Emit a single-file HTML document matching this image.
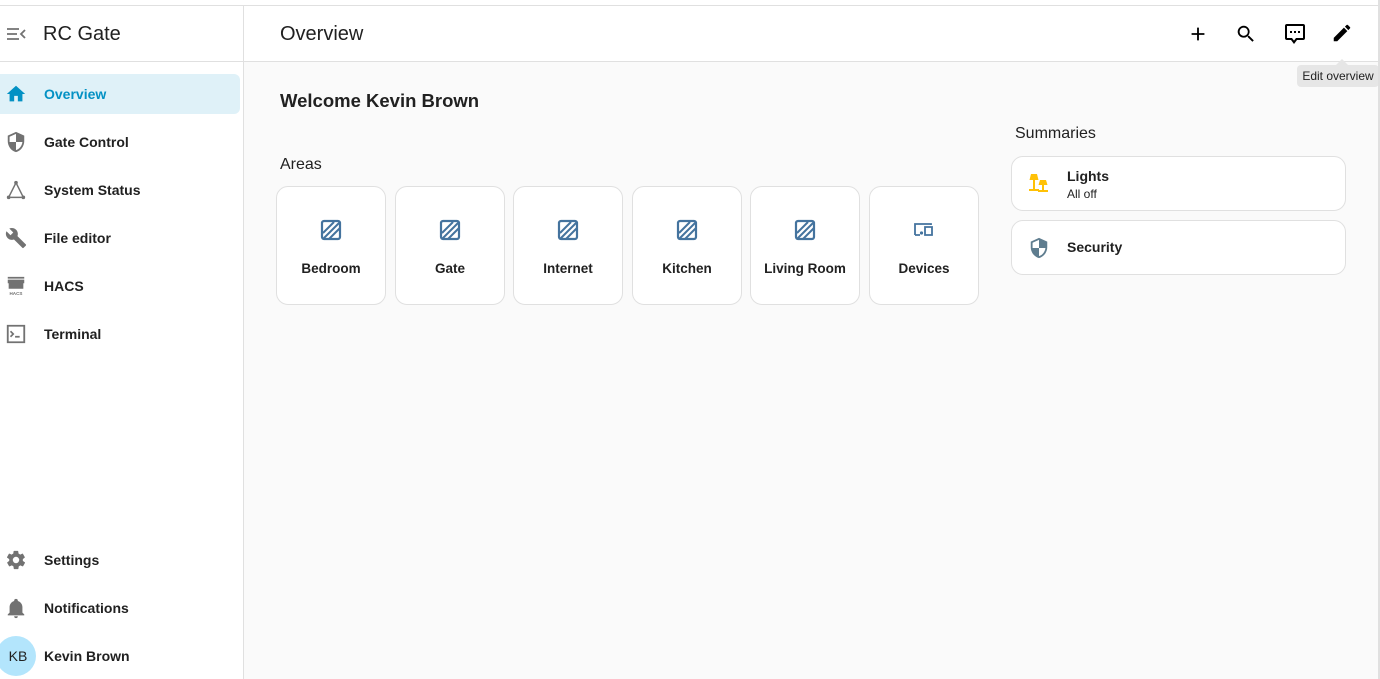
<!DOCTYPE html>
<html><head><style>
*{box-sizing:border-box;margin:0;padding:0}
body{width:1380px;height:679px;overflow:hidden;font-family:"Liberation Sans",sans-serif;background:#fff;position:relative;color:#212121}
.top{position:absolute;left:0;top:5px;width:1380px;height:1px;background:#e0e0e0}
.side{position:absolute;left:0;top:6px;width:244px;height:673px;border-right:1px solid #e0e0e0;background:#fff}
.main{position:absolute;left:244px;top:6px;width:1134px;height:673px;background:#fafafa}
.rline{position:absolute;left:1378px;top:0;width:2px;height:679px;background:#e0e0e0}
.hdr{position:absolute;left:0;top:0;width:100%;height:56px;border-bottom:1px solid #e0e0e0;background:#fff}
.item{position:absolute;left:0;width:240px;height:40px;display:flex;align-items:center;font-size:14px;font-weight:bold;color:#212121}
.item svg{position:absolute;left:5px;width:22px;height:22px;fill:#727272}
.item span{position:absolute;left:44px}
.card{position:absolute;top:180px;width:110px;height:119px;background:#fff;border:1px solid #e0e0e0;border-radius:12px;text-align:center}
.card svg{position:absolute;left:43px;top:32px;width:22px;height:22px}
.card div{position:absolute;top:74px;width:100%;font-size:13.5px;font-weight:bold}
.sum{position:absolute;left:767px;width:335px;height:55px;background:#fff;border:1px solid #e0e0e0;border-radius:12px}
</style></head><body>
<div class="top"></div>
<div class="side">
 <svg style="position:absolute;left:6px;top:20px" width="20" height="16" viewBox="0 0 20 16"><path d="M1 3h12M1 8h10M1 13h12M19 4l-4 4 4 4" stroke="#727272" stroke-width="1.8" fill="none"/></svg>
 <div style="position:absolute;left:43px;top:17px;font-size:20px">RC Gate</div>
 <div style="position:absolute;left:0;top:55px;width:243px;height:1px;background:#e0e0e0"></div>
 <div class="item" style="top:68px;background:#dff1f8;border-radius:0 6px 6px 0"><svg viewBox="0 0 24 24" style="fill:#0391c4"><path d="M10 20v-6h4v6h5v-8h3L12 3 2 12h3v8z"/></svg><span style="color:#0391c4">Overview</span></div>
 <div class="item" style="top:116px"><svg viewBox="0 0 24 24"><path d="M12 1L3 5v6c0 5.5 3.8 10.7 9 12 5.2-1.3 9-6.5 9-12V5zm0 11h7c-.5 4.1-3.3 7.8-7 8.9V12H5V6.3l7-3.1z"/></svg><span>Gate Control</span></div>
 <div class="item" style="top:164px"><svg viewBox="0 0 24 24"><path d="M12 2a2 2 0 110 4 2 2 0 010-4zM4 18a2 2 0 110 4 2 2 0 010-4zm16 0a2 2 0 110 4 2 2 0 010-4z"/><path d="M12 4L4 20M12 4l8 16M6 20h12" stroke="#727272" stroke-width="1.6" fill="none"/></svg><span>System Status</span></div>
 <div class="item" style="top:212px"><svg viewBox="0 0 24 24"><path d="M22.7 19l-9.1-9.1c.9-2.3.4-5-1.5-6.9-2-2-5-2.4-7.4-1.3L9 6 6 9 1.6 4.7C.4 7.1.9 10.1 2.9 12.1c1.9 1.9 4.6 2.4 6.9 1.5l9.1 9.1c.4.4 1 .4 1.4 0l2.3-2.3c.5-.4.5-1.1.1-1.4z"/></svg><span>File editor</span></div>
 <div class="item" style="top:260px"><svg viewBox="0 0 24 24"><path d="M3 2h18v2H3zM3 5h18v4H3zM4 9h16v6H4z"/><text x="12" y="22" font-size="5" text-anchor="middle" fill="#727272" font-family="Liberation Sans">HACS</text></svg><span>HACS</span></div>
 <div class="item" style="top:308px"><svg viewBox="0 0 24 24"><path d="M3 3h18v18H3z" stroke="#727272" stroke-width="2" fill="none"/><path d="M6 9l3 3-3 3M11 15h5" stroke="#727272" stroke-width="1.8" fill="none"/></svg><span>Terminal</span></div>
 <div class="item" style="top:534px"><svg viewBox="0 0 24 24"><path d="M12 15.5a3.5 3.5 0 110-7 3.5 3.5 0 010 7zm7.4-2.5c.1-.3.1-.7.1-1s0-.7-.1-1l2.1-1.6c.2-.2.2-.4.1-.6l-2-3.5c-.1-.2-.4-.3-.6-.2l-2.5 1c-.5-.4-1.1-.7-1.700-1L14.4 2.4c0-.2-.2-.4-.5-.4h-4c-.2 0-.4.2-.5.4l-.4 2.7c-.6.2-1.2.6-1.7 1l-2.5-1c-.2-.1-.5 0-.6.2l-2 3.5c-.1.2-.1.4.1.6L4.6 11v2l-2.1 1.6c-.2.2-.2.4-.1.6l2 3.5c.1.2.4.3.6.2l2.5-1c.5.4 1.1.7 1.7 1l.4 2.7c0 .2.2.4.5.4h4c.2 0 .4-.2.5-.4l.4-2.7c.6-.2 1.2-.6 1.7-1l2.5 1c.2.1.5 0 .6-.2l2-3.5c.1-.2.1-.4-.1-.6z"/></svg><span>Settings</span></div>
 <div class="item" style="top:582px"><svg viewBox="0 0 24 24"><path d="M21 19v1H3v-1l2-2v-6c0-3.1 2-5.8 5-6.7V4a2 2 0 014 0v.3c3 .9 5 3.6 5 6.7v6zm-7 2a2 2 0 01-4 0"/></svg><span>Notifications</span></div>
 <div style="position:absolute;left:-4px;top:630px;width:40px;height:40px;border-radius:50%;background:#b3e5fc;font-size:14px;line-height:40px;text-align:center;padding-left:4px">KB</div>
 <div class="item" style="top:630px"><span>Kevin Brown</span></div>
</div>
<div class="main">
 <div class="hdr">
  <div style="position:absolute;left:36px;top:17px;font-size:20px">Overview</div>
  <svg style="position:absolute;left:943px;top:17px" width="22" height="22" viewBox="0 0 24 24"><path d="M19 13h-6v6h-2v-6H5v-2h6V5h2v6h6z"/></svg>
  <svg style="position:absolute;left:991px;top:17px" width="22" height="22" viewBox="0 0 24 24"><path d="M15.5 14h-.8l-.3-.3A6.5 6.5 0 109.5 16a6.5 6.5 0 004.2-1.6l.3.3v.8l5 5 1.5-1.5zm-6 0a4.5 4.5 0 110-9 4.5 4.5 0 010 9z"/></svg>
  <svg style="position:absolute;left:1039px;top:16px" width="24" height="24" viewBox="0 0 24 24"><path d="M4 2h16a2 2 0 012 2v12a2 2 0 01-2 2h-6l-3 4-3-4H4a2 2 0 01-2-2V4a2 2 0 012-2zm0 2v12h5l2 2.6 2-2.6h7V4zm3 5h2v2H7zm4 0h2v2h-2zm4 0h2v2h-2z"/></svg>
  <svg style="position:absolute;left:1087px;top:16px" width="22" height="22" viewBox="0 0 24 24"><path d="M3 17.3V21h3.8L17.8 9.9l-3.7-3.7zM20.7 7c.4-.4.4-1 0-1.4l-2.3-2.3c-.4-.4-1-.4-1.4 0l-1.8 1.8 3.7 3.7z"/></svg>
 </div>
 <div style="position:absolute;left:1092px;top:53px;width:0;height:0;border:6px solid transparent;border-bottom-color:#e6e6e6;border-top:0"></div>
 <div style="position:absolute;left:1053px;top:59px;width:82px;height:22px;background:#e6e6e6;border-radius:4px;font-size:12px;line-height:22px;text-align:center;color:#212121">Edit overview</div>
 <div style="position:absolute;left:36px;top:84px;font-size:18.5px;font-weight:bold">Welcome Kevin Brown</div>
 <div style="position:absolute;left:36px;top:150px;font-size:16px">Areas</div>
 <div style="position:absolute;left:771px;top:119px;font-size:16px">Summaries</div>
 <div class="card" style="left:32px"><svg viewBox="0 0 22 22"><rect x="2" y="2" width="18" height="18" rx="2" fill="none" stroke="#44739e" stroke-width="2.2"/><path d="M3 14L14 3M3 20L20 3M9 20L20 9" stroke="#44739e" stroke-width="2"/></svg><div>Bedroom</div></div>
 <div class="card" style="left:151px"><svg viewBox="0 0 22 22"><rect x="2" y="2" width="18" height="18" rx="2" fill="none" stroke="#44739e" stroke-width="2.2"/><path d="M3 14L14 3M3 20L20 3M9 20L20 9" stroke="#44739e" stroke-width="2"/></svg><div>Gate</div></div>
 <div class="card" style="left:269px"><svg viewBox="0 0 22 22"><rect x="2" y="2" width="18" height="18" rx="2" fill="none" stroke="#44739e" stroke-width="2.2"/><path d="M3 14L14 3M3 20L20 3M9 20L20 9" stroke="#44739e" stroke-width="2"/></svg><div>Internet</div></div>
 <div class="card" style="left:388px"><svg viewBox="0 0 22 22"><rect x="2" y="2" width="18" height="18" rx="2" fill="none" stroke="#44739e" stroke-width="2.2"/><path d="M3 14L14 3M3 20L20 3M9 20L20 9" stroke="#44739e" stroke-width="2"/></svg><div>Kitchen</div></div>
 <div class="card" style="left:506px"><svg viewBox="0 0 22 22"><rect x="2" y="2" width="18" height="18" rx="2" fill="none" stroke="#44739e" stroke-width="2.2"/><path d="M3 14L14 3M3 20L20 3M9 20L20 9" stroke="#44739e" stroke-width="2"/></svg><div>Living Room</div></div>
 <div class="card" style="left:625px"><svg viewBox="0 0 22 22"><path d="M2 16V5h16v1M2 16h5M12 8h7v8h-7z" stroke="#44739e" stroke-width="1.8" fill="none"/><circle cx="8.5" cy="14" r="1.6" fill="#44739e"/></svg><div>Devices</div></div>
 <div class="sum" style="top:150px">
  <svg style="position:absolute;left:16px;top:16px" width="22" height="22" viewBox="0 0 22 22"><path d="M3 1h6l1.5 6h-9zM5 7h2v9H5zM1 16h10v2H1zM12 7h6l1.5 5h-9zM14 12h2v5h-2zM10 17h10v2H10z" fill="#ffc107"/></svg>
  <div style="position:absolute;left:55px;top:11px;font-size:14px;font-weight:bold">Lights</div>
  <div style="position:absolute;left:55px;top:30px;font-size:12px">All off</div>
 </div>
 <div class="sum" style="top:214px">
  <svg style="position:absolute;left:16px;top:16px" width="22" height="22" viewBox="0 0 24 24"><path fill="#5f7d8f" d="M12 1L3 5v6c0 5.5 3.8 10.7 9 12 5.2-1.3 9-6.5 9-12V5zm0 11h7c-.5 4.1-3.3 7.8-7 8.9V12H5V6.3l7-3.1z"/></svg>
  <div style="position:absolute;left:55px;top:18px;font-size:14px;font-weight:bold">Security</div>
 </div>
</div>
<div class="rline"></div>
</body></html>
